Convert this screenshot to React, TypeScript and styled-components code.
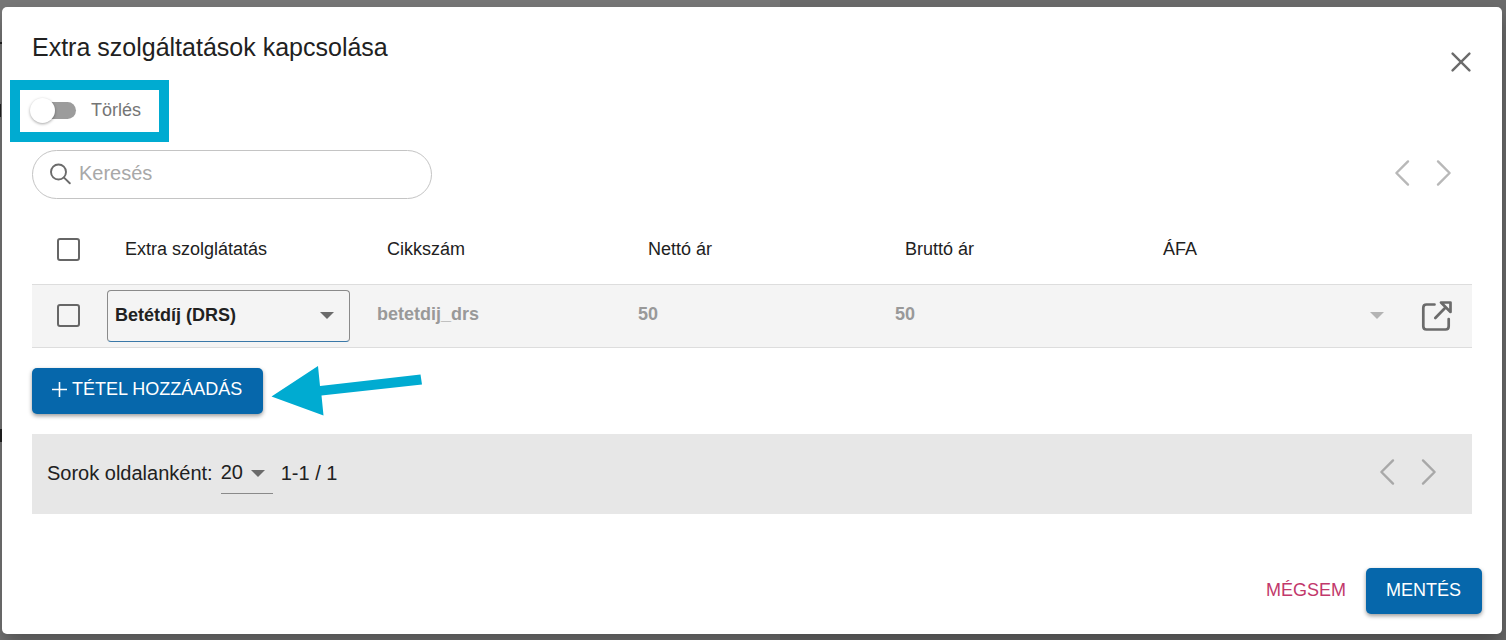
import React, { useState } from "react";
import styled, { createGlobalStyle } from "styled-components";

const GlobalStyle = createGlobalStyle`
  *, *::before, *::after { box-sizing: border-box; }
  body {
    margin: 0;
    font-family: Arial, "Liberation Sans", sans-serif;
    color: #212121;
    background: #666666;
  }
  button, input, select { font: inherit; color: inherit; }
`;

const Backdrop = styled.div`
  min-height: 100vh;
  padding: 7px 4px 6px 2px;
  background:
    linear-gradient(#222222, #222222) 0 104px / 1px 13px no-repeat,
    linear-gradient(#222222, #222222) 0 429px / 2px 13px no-repeat,
    linear-gradient(#222222, #222222) 0 42px / 2px 2px no-repeat,
    linear-gradient(90deg, #777777 0 780px, #6b6b6b 780px);
`;

const Dialog = styled.section`
  position: relative;
  display: flex;
  flex-direction: column;
  min-height: calc(100vh - 13px);
  padding: 24px 30px 20px;
  border-radius: 5px;
  background: #ffffff;
  box-shadow: 0 12px 20px rgba(0, 0, 0, 0.3);
`;

const DialogHeader = styled.header`
  display: flex;
  justify-content: space-between;
  height: 59px;
`;

const Title = styled.h2`
  margin: 0;
  font-size: 25px;
  line-height: 32px;
  font-weight: 400;
`;

const IconButton = styled.button`
  display: flex;
  align-items: center;
  justify-content: center;
  width: 42px;
  height: 42px;
  padding: 0;
  border: 0;
  background: none;
  color: #6b6b6b;
  cursor: pointer;

  &:disabled {
    color: #b8b8b8;
    cursor: default;
  }
`;

const CloseButton = styled(IconButton)`
  margin: 10px -10px 0 0;
`;

const SwitchLabel = styled.label`
  position: relative;
  display: inline-flex;
  align-items: center;
  align-self: flex-start;
  gap: 15px;
  height: 41px;
  font-size: 18px;
  color: #757575;

  &::after {
    content: "";
    position: absolute;
    inset: -10px -28px -11px -22px;
    border: 10px solid #00abd1;
    pointer-events: none;
  }
`;

const Switch = styled.input`
  appearance: none;
  position: relative;
  width: 44px;
  height: 17px;
  margin: 0;
  border-radius: 9px;
  background: #9c9c9c;

  &::before {
    content: "";
    position: absolute;
    top: -4px;
    left: -2px;
    width: 25px;
    height: 25px;
    border-radius: 50%;
    background: #ffffff;
    box-shadow: 0 1px 3px rgba(0, 0, 0, 0.35);
  }

  &:checked { background: #0667ab; }
  &:checked::before { left: 21px; }
`;

const Toolbar = styled.div`
  display: flex;
  align-items: flex-start;
  justify-content: space-between;
  padding-right: 7px;
  margin-top: 19px;
`;

const SearchField = styled.label`
  display: flex;
  align-items: center;
  gap: 8px;
  width: 400px;
  height: 49px;
  padding: 0 16px 2px;
  border: 1px solid #c4c4c4;
  border-radius: 25px;
  color: #6b6b6b;
`;

const SearchInput = styled.input`
  flex: 1;
  min-width: 0;
  padding: 0;
  border: 0;
  outline: 0;
  background: none;
  font-size: 20px;
  color: #212121;

  &::placeholder { color: #a8a8a8; opacity: 1; }
`;

const Pager = styled.nav`
  display: flex;
  padding: 2px 0;
`;

const Table = styled.table`
  width: 100%;
  margin-top: 14px;
  table-layout: fixed;
  border-collapse: collapse;
`;

const Col = styled.col<{ $width: number }>`
  width: ${(p) => p.$width}px;
`;

const HeadCell = styled.th`
  height: 71px;
  padding: 2px 0 0 18px;
  font-size: 18px;
  font-weight: 400;
  text-align: left;
`;

const BodyRow = styled.tr`
  height: 63px;
  border-top: 1px solid #dddddd;
  border-bottom: 1px solid #dddddd;
  background: #f4f4f4;
`;

const Cell = styled.td`
  padding: 0;
`;

const Checkbox = styled.input`
  display: block;
  appearance: none;
  width: 23px;
  height: 23px;
  margin: 0 0 0 25px;
  border: 2px solid #666666;
  border-radius: 3px;

  &:checked { background: #0667ab; border-color: #0667ab; }
`;

const CheckCell = styled(HeadCell)`
  padding: 2px 0 0;
`;

const SelectBox = styled.div`
  display: grid;
  align-items: center;

  > * { grid-area: 1 / 1; }
  > svg { justify-self: end; pointer-events: none; }
`;

const ProductBox = styled(SelectBox)`
  width: 243px;
  max-width: 100%;
  > svg { margin-right: 16px; color: #6b6b6b; }
`;

const ProductSelect = styled.select`
  appearance: none;
  width: 100%;
  height: 52px;
  padding: 0 36px 2px 7px;
  border: 1px solid #8a8a8a;
  border-bottom-color: #3a78a8;
  border-radius: 4px;
  background: none;
  font-size: 18px;
  font-weight: 700;
`;

const TaxBox = styled(SelectBox)`
  > svg { margin-right: 18px; color: #b3b3b3; }
`;

const TaxSelect = styled.select`
  appearance: none;
  width: 100%;
  height: 48px;
  padding: 0 36px 0 8px;
  border: 0;
  background: none;
`;

const ValueInput = styled.input`
  display: block;
  width: 100%;
  height: 48px;
  padding: 0 8px 2px;
  border: 0;
  background: none;
  font-size: 18px;
  font-weight: 700;
  color: #999999;
`;

const OpenCell = styled(Cell)`
  > button { margin-left: 14px; }
`;

const AddRow = styled.div`
  display: flex;
  align-items: flex-start;
  gap: 8px;
  height: 66px;
  margin-top: 20px;
`;

const PrimaryButton = styled.button`
  display: flex;
  align-items: center;
  gap: 5px;
  height: 46px;
  padding: 0 21px 2px 20px;
  border: 0;
  border-radius: 5px;
  background: #0667ab;
  box-shadow: 0 2px 4px rgba(0, 0, 0, 0.4);
  color: #ffffff;
  font-size: 18px;
  white-space: nowrap;
  cursor: pointer;
`;

const TextButton = styled.button`
  height: 46px;
  padding: 0 20px 2px;
  border: 0;
  background: none;
  color: #c2386b;
  font-size: 18px;
  cursor: pointer;
`;

const Pagination = styled.footer`
  display: flex;
  align-items: center;
  height: 80px;
  padding: 0 22px 0 15px;
  background: #e7e7e7;
  font-size: 20px;

  > nav { align-self: flex-start; margin: 15px 0 0 auto; }
  button:disabled { color: #a8a8a8; }
`;

const PageSizeBox = styled(SelectBox)`
  width: 52px;
  margin: 0 8px;
  > svg { margin-right: 8px; color: #6b6b6b; }
`;

const PageSizeSelect = styled.select`
  appearance: none;
  width: 100%;
  height: 40px;
  padding: 0 0 2px;
  border: 0;
  border-bottom: 1px solid #8a8a8a;
  border-radius: 0;
  background: none;
`;

const Actions = styled.div`
  display: flex;
  justify-content: flex-end;
  margin: auto -10px 0 0;
`;

const Arrow = styled.svg`
  overflow: visible;
  flex: none;
`;

const Caret = () => (
  <svg width="14" height="7" viewBox="0 0 14 7" aria-hidden="true">
    <path d="M0 0H14L7 7Z" fill="currentColor" />
  </svg>
);

const Chevron = ({ d }: { d: string }) => (
  <svg width="16" height="28" viewBox="0 0 16 28" fill="none" stroke="currentColor" strokeWidth="2.4" strokeLinecap="round" strokeLinejoin="round" aria-hidden="true">
    <path d={d} />
  </svg>
);

const PageButtons = () => (
  <Pager aria-label="Lapozás">
    <IconButton disabled aria-label="Előző oldal"><Chevron d="M14 2.400L2.400 14L14 25.600" /></IconButton>
    <IconButton disabled aria-label="Következő oldal"><Chevron d="M2 2.400L13.600 14L2 25.600" /></IconButton>
  </Pager>
);

const CloseIcon = () => (
  <svg width="20" height="20" viewBox="0 0 20 20" fill="none" stroke="currentColor" strokeWidth="2.4" strokeLinecap="round" aria-hidden="true">
    <path d="M1.6 1.6L18.4 18.4M18.4 1.6L1.6 18.4" />
  </svg>
);

const SearchIcon = () => (
  <svg width="22" height="22" viewBox="0 0 22 22" fill="none" stroke="currentColor" strokeWidth="1.9" strokeLinecap="round" aria-hidden="true">
    <circle cx="9.5" cy="9" r="7.500" />
    <path d="M15 14.600L20.800 20.300" />
  </svg>
);

const PlusIcon = () => (
  <svg width="15" height="15" viewBox="0 0 15 15" stroke="currentColor" strokeWidth="1.6" aria-hidden="true">
    <path d="M7.5 0V15M0 7.5H15" />
  </svg>
);

const OpenIcon = () => (
  <svg width="32" height="32" viewBox="0 0 32 32" fill="none" stroke="currentColor" strokeWidth="2.7" strokeLinecap="round" strokeLinejoin="round" aria-hidden="true">
    <path d="M13.5 4.5H5.5Q2.3 4.5 2.3 7.7V26.3Q2.3 29.5 5.5 29.5H24.500Q27.7 29.5 27.7 26.3V19" />
    <path d="M14.3 18L24.5 7.500M20 2.5H29.5V12Z" />
  </svg>
);

const PointerArrow = () => (
  <Arrow width="152" height="48" viewBox="0 0 152 48" aria-hidden="true">
    <path d="M0.500 28.500L47 -2L49 18L149.500 6.500L151 16.500L50.500 27.500L52.500 47.500Z" fill="#00abd1" />
  </Arrow>
);

const widths = [75, 262, 261, 257, 258, 257, 70];

export default function App() {
  const [deleting, setDeleting] = useState(false);
  return (
    <>
      <GlobalStyle />
      <Backdrop>
        <Dialog role="dialog" aria-labelledby="dialog-title">
          <DialogHeader>
            <Title id="dialog-title">Extra szolgáltatások kapcsolása</Title>
            <CloseButton aria-label="Bezárás"><CloseIcon /></CloseButton>
          </DialogHeader>
          <SwitchLabel>
            <Switch type="checkbox" role="switch" checked={deleting} onChange={(e) => setDeleting(e.target.checked)} />
            Törlés
          </SwitchLabel>
          <Toolbar>
            <SearchField>
              <SearchIcon />
              <SearchInput type="text" placeholder="Keresés" aria-label="Keresés" />
            </SearchField>
            <PageButtons />
          </Toolbar>
          <Table>
            <colgroup>{widths.map((w, i) => <Col key={i} $width={w} />)}</colgroup>
            <thead>
              <tr>
                <CheckCell><Checkbox type="checkbox" aria-label="Összes kijelölése" /></CheckCell>
                <HeadCell>Extra szolglátatás</HeadCell>
                <HeadCell>Cikkszám</HeadCell>
                <HeadCell>Nettó ár</HeadCell>
                <HeadCell>Bruttó ár</HeadCell>
                <HeadCell>ÁFA</HeadCell>
                <CheckCell />
              </tr>
            </thead>
            <tbody>
              <BodyRow>
                <Cell><Checkbox type="checkbox" aria-label="Sor kijelölése" /></Cell>
                <Cell>
                  <ProductBox>
                    <ProductSelect aria-label="Extra szolglátatás"><option>Betétdíj (DRS)</option></ProductSelect>
                    <Caret />
                  </ProductBox>
                </Cell>
                <Cell><ValueInput disabled aria-label="Cikkszám" defaultValue="betetdij_drs" /></Cell>
                <Cell><ValueInput disabled aria-label="Nettó ár" defaultValue="50" /></Cell>
                <Cell><ValueInput disabled aria-label="Bruttó ár" defaultValue="50" /></Cell>
                <Cell>
                  <TaxBox>
                    <TaxSelect disabled aria-label="ÁFA" />
                    <Caret />
                  </TaxBox>
                </Cell>
                <OpenCell><IconButton aria-label="Megnyitás"><OpenIcon /></IconButton></OpenCell>
              </BodyRow>
            </tbody>
          </Table>
          <AddRow>
            <PrimaryButton><PlusIcon />TÉTEL HOZZÁADÁS</PrimaryButton>
            <PointerArrow />
          </AddRow>
          <Pagination>
            <label htmlFor="page-size">Sorok oldalanként:</label>
            <PageSizeBox>
              <PageSizeSelect id="page-size"><option>20</option></PageSizeSelect>
              <Caret />
            </PageSizeBox>
            <span>1-1 / 1</span>
            <PageButtons />
          </Pagination>
          <Actions>
            <TextButton>MÉGSEM</TextButton>
            <PrimaryButton>MENTÉS</PrimaryButton>
          </Actions>
        </Dialog>
      </Backdrop>
    </>
  );
}
